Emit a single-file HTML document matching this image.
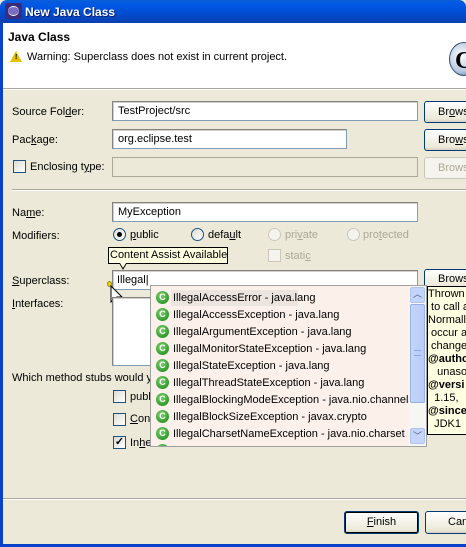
<!DOCTYPE html>
<html><head><style>
*{margin:0;padding:0;box-sizing:border-box}
body{width:466px;height:547px;position:relative;overflow:hidden;background:#ece9d8;font:11px "Liberation Sans",sans-serif;color:#000}
.a{position:absolute;white-space:nowrap}
.fld{position:absolute;background:#fff;border:1px solid #7f9db9;border-top-color:#848284;border-left-color:#848284;box-shadow:inset 1px 1px 0 #d4d0c8}
.btn{position:absolute;background:linear-gradient(#fff,#ece9d8 85%,#d6d0c5);border:1px solid #003c74;border-radius:3px;text-align:center;line-height:20px}
.cb{position:absolute;width:13px;height:13px;border:1px solid #1c5180;background:linear-gradient(135deg,#dcdcd5,#fff)}
.rd{position:absolute;width:13px;height:13px;border-radius:50%;border:1px solid #1c5180;background:linear-gradient(135deg,#dcdcd5,#fff)}
.dis{color:#aca899}
.ic{position:absolute;width:13px;height:13px;border-radius:50%;background:radial-gradient(circle at 40% 35%,#7fd36f,#2f9a2a 70%);color:#fff;font-weight:bold;font-size:9px;line-height:13px;text-align:center}
.it{position:absolute;left:22px}
</style></head><body>
<div class="a" style="left:0;top:0;width:466px;height:23px;background:linear-gradient(#0a5fd8,#0058e6 20%,#0348c8 70%,#0a3fb0);border-radius:7px 7px 0 0"></div>
<div class="a" style="left:5px;top:3px;width:17px;height:16px;background:#3a2c7a;border-radius:2px"><div style="position:absolute;left:3px;top:3px;width:11px;height:10px;border-radius:50%;background:#7a6cc0;border-top:1px solid #fff;border-bottom:1px solid #fff"></div></div>
<div class="a" style="left:25px;top:5px;color:#fff;font-weight:bold;font-size:12px;text-shadow:1px 1px #0a1e6e">New Java Class</div>
<div class="a" style="left:0;top:23px;width:3px;height:524px;background:#0842c8"></div>
<div class="a" style="left:0;top:544px;width:466px;height:3px;background:#0842c8"></div>
<div class="a" style="left:3px;top:23px;width:463px;height:65px;background:#fff"></div>
<div class="a" style="left:8px;top:30px;font-weight:bold;font-size:12px">Java Class</div>
<div class="a" style="left:10px;top:51px;width:0;height:0;border-left:6px solid transparent;border-right:6px solid transparent;border-bottom:11px solid #e8c000"></div>
<div class="a" style="left:15px;top:54px;font-size:7px;font-weight:bold">!</div>
<div class="a" style="left:27px;top:51px">Warning: Superclass does not exist in current project.</div>
<div class="a" style="left:449px;top:42px;width:30px;height:34px;border-radius:50%;background:radial-gradient(circle at 40% 40%,#fff,#b8c8e0 60%,#4a6ea8);border:1px solid #34507a"></div>
<div class="a" style="left:455px;top:48px;font-size:24px;font-weight:bold;font-family:'Liberation Serif',serif">C</div>
<div class="a" style="left:3px;top:88px;width:463px;height:1px;background:#aca899"></div>
<div class="a" style="left:3px;top:89px;width:463px;height:1px;background:#fff"></div>
<div class="a" style="left:12px;top:106px">Source Fol<u>d</u>er:</div>
<div class="fld" style="left:112px;top:101px;width:306px;height:20px"><span class="a" style="left:5px;top:3px">TestProject/src</span></div>
<div class="btn" style="left:424px;top:101px;width:60px;height:22px;text-align:left;padding-left:13px">Br<u>o</u>wse...</div>
<div class="a" style="left:12px;top:134px">Pac<u>k</u>age:</div>
<div class="fld" style="left:112px;top:129px;width:235px;height:20px"><span class="a" style="left:5px;top:3px">org.eclipse.test</span></div>
<div class="btn" style="left:424px;top:129px;width:60px;height:22px;text-align:left;padding-left:13px">Bro<u>w</u>se...</div>
<div class="cb" style="left:13px;top:160px"></div>
<div class="a" style="left:30px;top:161px">Enclosing t<u>y</u>pe:</div>
<div class="fld" style="left:112px;top:157px;width:306px;height:20px;background:#ece9d8;box-shadow:none;border-color:#aca899"></div>
<div class="btn dis" style="left:424px;top:157px;width:60px;height:22px;text-align:left;padding-left:13px;border-color:#c9c7ba;background:#f4f3ee">Brows<u>e</u>...</div>
<div class="a" style="left:12px;top:189px;width:454px;height:1px;background:#aca899"></div>
<div class="a" style="left:12px;top:190px;width:454px;height:1px;background:#fff"></div>
<div class="a" style="left:12px;top:207px">Na<u>m</u>e:</div>
<div class="fld" style="left:112px;top:202px;width:306px;height:20px"><span class="a" style="left:5px;top:3px">MyException</span></div>
<div class="a" style="left:12px;top:230px">Modifiers:</div>
<div class="rd" style="left:113px;top:228px"><div style="position:absolute;left:3px;top:3px;width:5px;height:5px;border-radius:50%;background:#000"></div></div>
<div class="a" style="left:130px;top:229px"><u>p</u>ublic</div>
<div class="rd" style="left:191px;top:228px"></div>
<div class="a" style="left:208px;top:229px">defa<u>u</u>lt</div>
<div class="rd" style="left:268px;top:228px;border-color:#cac8bb;background:#f4f3ee"></div>
<div class="a dis" style="left:285px;top:229px">pri<u>v</u>ate</div>
<div class="rd" style="left:347px;top:228px;border-color:#cac8bb;background:#f4f3ee"></div>
<div class="a dis" style="left:363px;top:229px">pro<u>t</u>ected</div>
<div class="cb" style="left:268px;top:249px;border-color:#cac8bb;background:#f4f3ee"></div>
<div class="a dis" style="left:285px;top:250px">stati<u>c</u></div>
<div class="a" style="left:108px;top:247px;width:120px;height:17px;background:#ffffe1;border:1px solid #000;padding:1px 0 0 1px">Content Assist Available</div>
<div class="a" style="left:119px;top:263px;width:0;height:0;border-left:4px solid transparent;border-right:4px solid transparent;border-top:7px solid #000"></div>
<div class="a" style="left:120px;top:263px;width:0;height:0;border-left:3px solid transparent;border-right:3px solid transparent;border-top:5px solid #ffffe1"></div>
<div class="a" style="left:12px;top:275px"><u>S</u>uperclass:</div>
<div class="fld" style="left:112px;top:270px;width:306px;height:20px"><span class="a" style="left:4px;top:3px">Illegal|</span></div>
<div class="a" style="left:107px;top:281px;width:5px;height:6px;border-radius:50%;background:#f0d000;border:1px solid #9a8a00"></div>
<svg class="a" style="left:110px;top:285px" width="14" height="22" viewBox="0 0 14 22"><path d="M1 1 L1 17 L5 13 L8 20 L10 19 L7 12 L12 12 Z" fill="#fff" stroke="#000" stroke-width="1"/></svg>
<div class="btn" style="left:424px;top:269px;width:60px;height:21px;text-align:left;padding-left:13px;line-height:19px">Brows<u>e</u>...</div>
<div class="a" style="left:12px;top:298px"><u>I</u>nterfaces:</div>
<div class="fld" style="left:112px;top:297px;width:40px;height:69px"></div>
<div class="a" style="left:12px;top:372px">Which method stubs would y</div>
<div class="cb" style="left:113px;top:390px"></div><div class="a" style="left:130px;top:391px">publ</div>
<div class="cb" style="left:113px;top:413px"></div><div class="a" style="left:130px;top:413px"><u>C</u>ons</div>
<div class="cb" style="left:113px;top:436px;font-size:11px;line-height:10px;text-align:center;font-weight:bold">✓</div><div class="a" style="left:130px;top:437px">In<u>h</u>e</div>
<div class="a" style="left:150px;top:285px;width:277px;height:162px;background:#fcf0ea;border:1px solid #a0a0a0;overflow:hidden">
<div class="a" style="left:20px;top:4px;width:127px;height:16px;background:#ece4df"></div>
<div class="ic" style="left:5px;top:5px">C</div><div class="it" style="top:6px">IllegalAccessError - java.lang</div>
<div class="ic" style="left:5px;top:22px">C</div><div class="it" style="top:23px">IllegalAccessException - java.lang</div>
<div class="ic" style="left:5px;top:39px">C</div><div class="it" style="top:40px">IllegalArgumentException - java.lang</div>
<div class="ic" style="left:5px;top:56px">C</div><div class="it" style="top:57px">IllegalMonitorStateException - java.lang</div>
<div class="ic" style="left:5px;top:73px">C</div><div class="it" style="top:74px">IllegalStateException - java.lang</div>
<div class="ic" style="left:5px;top:90px">C</div><div class="it" style="top:91px">IllegalThreadStateException - java.lang</div>
<div class="ic" style="left:5px;top:107px">C</div><div class="it" style="top:108px">IllegalBlockingModeException - java.nio.channels</div>
<div class="ic" style="left:5px;top:124px">C</div><div class="it" style="top:125px">IllegalBlockSizeException - javax.crypto</div>
<div class="ic" style="left:5px;top:141px">C</div><div class="it" style="top:142px">IllegalCharsetNameException - java.nio.charset</div>
<div class="ic" style="left:5px;top:158px">C</div>
<div class="a" style="left:258px;top:0;width:17px;height:160px;background:#f6f6f2"></div>
<div class="a" style="left:259px;top:1px;width:15px;height:16px;background:#c4d4fa;border:1px solid #b0c4ef;border-radius:2px;text-align:center;font-size:9px;color:#4d6185;line-height:13px">︿</div>
<div class="a" style="left:259px;top:18px;width:15px;height:99px;background:linear-gradient(90deg,#c4d4fa,#b9ccf8);border:1px solid #98b0e8;border-radius:2px"><div style="position:absolute;left:3px;top:45px;width:7px;height:6px;border-top:1px solid #8ea8e0;border-bottom:1px solid #8ea8e0"></div></div>
<div class="a" style="left:259px;top:142px;width:15px;height:16px;background:#c4d4fa;border:1px solid #b0c4ef;border-radius:2px;text-align:center;font-size:9px;color:#4d6185;line-height:15px">﹀</div>
</div>
<div class="a" style="left:427px;top:286px;width:45px;height:149px;background:#ffffe1;border:1px solid #000;line-height:13px;padding-top:1px;overflow:hidden">
<div>Thrown</div><div>&nbsp;to call a</div><div>Normally</div><div>&nbsp;occur a</div><div>&nbsp;change</div><div><b>@autho</b></div><div>&nbsp;&nbsp;&nbsp;unaso</div><div><b>@versi</b></div><div>&nbsp;&nbsp;1.15,</div><div><b>@since</b></div><div>&nbsp;&nbsp;JDK1</div>
</div>
<div class="a" style="left:3px;top:498px;width:463px;height:1px;background:#aca899"></div>
<div class="a" style="left:3px;top:499px;width:463px;height:1px;background:#fff"></div>
<div class="btn" style="left:344px;top:511px;width:75px;height:23px;box-shadow:inset 0 0 0 1px #000"><u>F</u>inish</div>
<div class="btn" style="left:425px;top:511px;width:75px;height:23px;text-align:left;padding-left:22px">Cancel</div>
</body></html>
